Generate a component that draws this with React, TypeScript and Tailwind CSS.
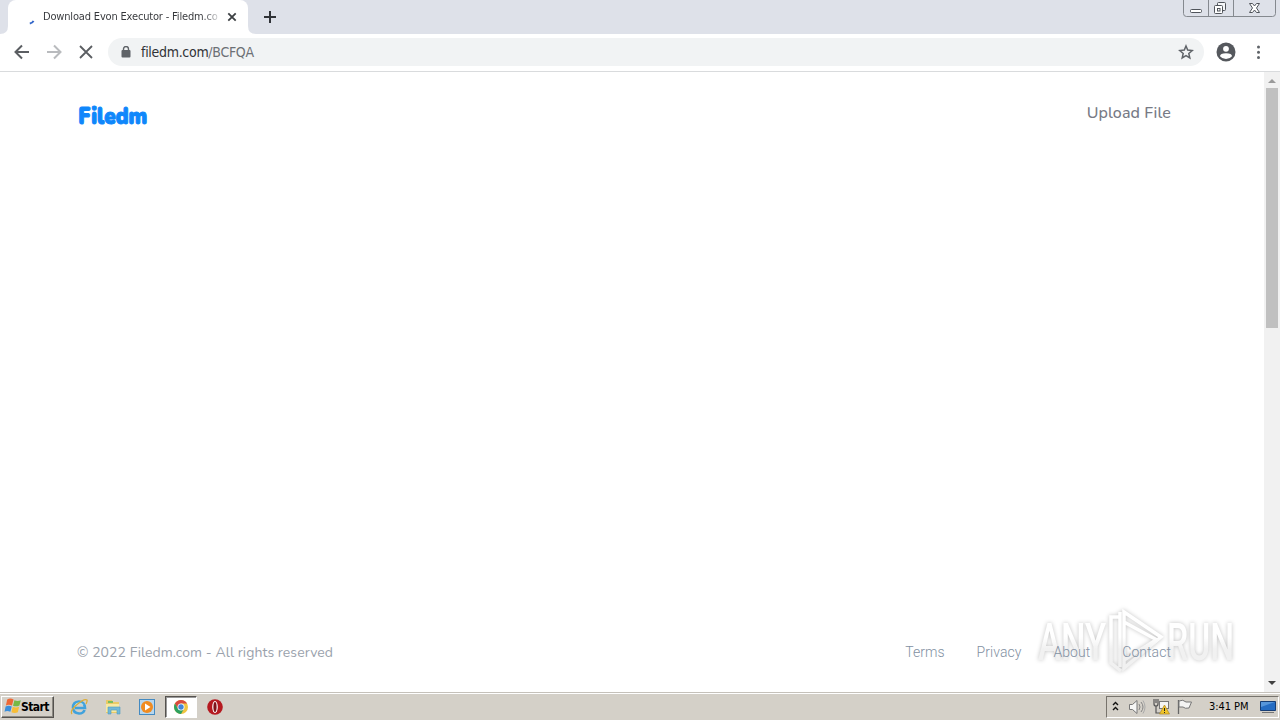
import React from "react";

function TabStrip() {
  return (
    <header className="relative flex h-[34px] shrink-0 bg-[#dee1e9]">
      <svg className="h-[34px] w-2 shrink-0" viewBox="0 0 8 34">
        <path d="M0 34Q8 34 8 26V34Z" fill="#fff" />
      </svg>
      <div className="flex w-60 items-center rounded-t-lg bg-white">
        <svg className="ml-[17px] h-4 w-[18px] shrink-0" viewBox="0 0 18 16">
          <path d="M4.800 14.500Q7.500 14 8.500 11.800" stroke="#3367c9" strokeWidth="2" fill="none" />
        </svg>
        <span className="w-[175px] bg-gradient-to-r from-[#34363a] from-91% to-[#d5d6d8] bg-clip-text pt-px text-[11px] tracking-[-0.17px] whitespace-nowrap text-transparent">
          Download Evon Executor - Filedm.co
        </span>
        <svg className="ml-2 h-4 w-4 shrink-0" viewBox="0 0 16 16" stroke="#3c4043" strokeWidth="1.8">
          <path d="M2.300 4.300l7.400 7.400M9.700 4.300l-7.400 7.400" />
        </svg>
      </div>
      <svg className="h-[34px] w-2 shrink-0" viewBox="0 0 8 34">
        <path d="M8 34Q0 34 0 26V34Z" fill="#fff" />
      </svg>
      <svg className="mt-[10px] ml-[7px] h-[14px] w-[14px]" viewBox="0 0 14 14" stroke="#303338" strokeWidth="2">
        <path d="M7 1v12M1 7h12" />
      </svg>
      <svg className="ml-auto h-[18px] w-[97px]" viewBox="0 0 97 18" fill="none" stroke="#85898f">
        <path d="M.5 0v13.500q0 3 3 3h86q3 0 3-3V0M25.500 0v16M50.500 0v16" />
        <g stroke="#50545b">
          <rect x="7.500" y="9.500" width="11" height="3" rx="1" fill="#fff" />
          <path d="M34.500 5V3.500q0-1 1-1h6q1 0 1 1v6q0 1-1 1H40" fill="#f5f6f8" />
          <rect x="31.500" y="5.500" width="8" height="8" rx="1" fill="#fff" />
          <rect x="34.500" y="8.500" width="2.500" height="2.500" />
          <path d="M66.500 3.500h3l2 2.500 2-2.500h3L73.500 8l3 4.500h-3l-2-2.500-2 2.500h-3l3-4.500z" fill="#fff" />
        </g>
      </svg>
    </header>
  );
}

function Toolbar() {
  return (
    <div className="flex h-[38px] shrink-0 items-center border-b border-[#d9dbdd] bg-white pb-px">
      <svg className="h-6 w-[108px]" viewBox="0 0 108 24" fill="none" strokeWidth="2">
        <path d="M29 12H16M22 5.500L15.500 12l6.500 6.500" stroke="#5b5e62" />
        <path d="M47 12h13M54 5.500l6.500 6.500-6.500 6.500" stroke="#b9bbbe" />
        <path d="M80 6l12 12M92 6L80 18" stroke="#5b5e62" strokeWidth="1.800" />
      </svg>
      <div className="flex h-7 w-[1096px] items-center rounded-full bg-[#f1f3f4] pr-[10px] pl-[13px]">
        <svg className="h-3 w-[10px]" viewBox="0 0 10 12">
          <path d="M2.500 5V3a2.500 2.500 0 015 0v2" fill="none" stroke="#5f6368" strokeWidth="1.400" />
          <rect x=".5" y="4" width="9" height="7.500" rx="1" fill="#5f6368" />
        </svg>
        <span className="ml-[10px] text-[14px] tracking-[-0.3px] whitespace-nowrap text-[#303236]">
          filedm.com<span className="text-[#6c7075]">/BCFQA</span>
        </span>
        <svg className="ml-auto h-4 w-4" viewBox="0 0 16 16" fill="none" stroke="#5f6368" strokeWidth="1.500">
          <path d="M8 2l1.700 4.100 4.500.4-3.400 3 1 4.400L8 11.600l-3.800 2.300 1-4.400-3.400-3 4.500-.4z" />
        </svg>
      </div>
      <svg className="h-6 w-[76px]" viewBox="0 0 76 24">
        <circle cx="22" cy="12" r="9.500" fill="#55585d" />
        <circle cx="22" cy="8.800" r="2.900" fill="#fff" />
        <path d="M16 16.300q0-3 6-3t6 3q-2 2.700-6 2.700t-6-2.700" fill="#fff" />
        <g fill="#5f6368">
          <circle cx="54.500" cy="7" r="1.500" />
          <circle cx="54.500" cy="12.300" r="1.500" />
          <circle cx="54.500" cy="17.600" r="1.500" />
        </g>
      </svg>
    </div>
  );
}

function Watermark() {
  return (
    <svg
      className="absolute top-[535px] left-[1031px] h-[70px] w-[208px] drop-shadow-[0_0_2px_rgba(0,0,0,0.24)]"
      viewBox="0 0 208 70"
    >
      <defs>
        <linearGradient id="fade" gradientUnits="userSpaceOnUse" x1="0" y1="30" x2="0" y2="42">
          <stop stopColor="#fff" />
          <stop offset="1" stopColor="#f1f1f1" />
        </linearGradient>
      </defs>
      <g fill="url(#fade)" className="font-['Roboto',sans-serif] text-[52px] font-medium">
        <text x="7" y="53" textLength="68" lengthAdjust="spacingAndGlyphs">
          ANY
        </text>
        <text x="136" y="53" textLength="67" lengthAdjust="spacingAndGlyphs">
          RUN
        </text>
      </g>
      <path
        d="M93 5l37 25-37 31zM88 10h-8v46l10 8M93 15l33 18M89 5v55M93 53l32-20"
        fill="none"
        stroke="url(#fade)"
        strokeWidth="3.500"
      />
    </svg>
  );
}

function Page() {
  return (
    <div className="relative flex min-h-0 flex-1 bg-white">
      <Watermark />
      <main className="relative flex w-[1264px] flex-col justify-between pr-[93px] pl-[78px] font-['Nunito','Noto_Sans',sans-serif]">
        <div className="flex h-[82px] items-center justify-between">
          <svg className="mt-1 h-7 w-[76px] overflow-visible" viewBox="0 0 76 28">
            <text
              x=".3"
              y="22.500"
              textLength="69"
              lengthAdjust="spacingAndGlyphs"
              className="font-['Nunito','Noto_Sans',sans-serif] text-[23.500px] font-black"
              fill="#0f87fb"
              stroke="#0f87fb"
              strokeWidth="1.100"
              strokeLinejoin="round"
            >
              Filedm
            </text>
          </svg>
          <a className="text-[16px] font-medium tracking-[0.1px] whitespace-nowrap text-[#777a85]">Upload File</a>
        </div>
        <footer className="flex h-20 items-center justify-between text-[14px] text-[#9aa2ac]">
          <span className="-ml-px tracking-[0.06px] whitespace-nowrap">© 2022 Filedm.com - All rights reserved</span>
          <nav className="flex gap-8 font-['Roboto',sans-serif] font-light tracking-[0.05px] text-[#8290a2]">
            <a>Terms</a>
            <a>Privacy</a>
            <a>About</a>
            <a>Contact</a>
          </nav>
        </footer>
      </main>
      <aside className="flex w-4 flex-col items-center bg-[#f1f1f1]">
        <svg className="h-4 w-4 shrink-0" viewBox="0 0 16 16">
          <path d="M4 11l4-4 4 4z" fill="#9a9a9a" />
        </svg>
        <div className="h-60 w-3 bg-[#c0c0c0]" />
        <svg className="mt-auto h-[17px] w-4" viewBox="0 0 16 17">
          <path d="M4 6h8l-4 4z" fill="#404040" />
        </svg>
      </aside>
    </div>
  );
}

function Explorer() {
  return (
    <svg className="h-[18px] w-[18px]" viewBox="0 0 18 18" fill="none">
      <path d="M14.500 12Q13.500 15.500 9 15.500q-6-.5-6-6T9 3.500q5.500 0 6 6.500H5" stroke="#41a2dc" strokeWidth="2.600" />
      <path d="M5 8q1-3 4-3 3 0 4 2" stroke="#9edcf5" strokeWidth="1.100" />
      <path d="M2 16Q-.5 13 7 6.500T17 2q.5 1-1 4" stroke="#ddad35" strokeWidth="1.300" />
    </svg>
  );
}

function Taskbar() {
  return (
    <footer className="flex h-[28px] shrink-0 items-center border-t border-[#c5c1ba] bg-[#d4d0c8] pt-px pb-px text-[11px] text-black shadow-[inset_0_1px_0_#fff]">
      <div className="ml-px flex h-[22px] w-[53px] items-center border border-t-white border-r-[#55524e] border-b-[#55524e] border-l-white pl-0.5 font-bold shadow-[inset_-1px_-1px_0_#8c8982]">
        <svg className="h-[17px] w-[17px] shrink-0" viewBox="0 0 16 16">
          <path d="M3 1.500q3-2 6 0L7.500 7q-3-1.500-5.700 0z" fill="#ed6835" />
          <path d="M9.800 2q3 1.500 6 0L14.500 7q-3 1.500-6 .2z" fill="#76b944" />
          <path d="M1.500 8q3-1.500 5.800 0L6 13q-3-1.500-5.500 0z" fill="#398edb" />
          <path d="M8.200 8.300q3 1.500 6 0L13 13.300q-3 1.500-6 0z" fill="#f7bd36" />
        </svg>
        <span className="text-[12px] tracking-[-0.6px]">Start</span>
      </div>
      <div className="ml-4 flex items-center">
        <Explorer />
        <svg className="ml-[16px] h-[18px] w-[18px]" viewBox="0 0 18 18">
          <path d="M2 2h6l1 2h6v11H2z" fill="#e9ca67" />
          <path d="M4 3h5v2H4z" fill="#79bd60" />
          <path d="M2 6h13v8H2z" fill="#f7e9a2" />
          <path d="M4 16V9h12v7h-3v-4H7v4z" fill="#71b8d8" stroke="#4f9bc1" strokeWidth=".6" />
        </svg>
        <svg className="ml-[16px] h-[18px] w-[18px]" viewBox="0 0 18 18">
          <rect x="1.500" y="1.500" width="15" height="15" fill="#b7d6ed" stroke="#448ac1" />
          <circle cx="9" cy="9" r="6" fill="#f08b20" />
          <path d="M7 5.500v7L12.500 9z" fill="#fff" />
        </svg>
        <div className="ml-[9px] flex h-[22px] w-8 items-center justify-center border border-t-[#55524e] border-r-white border-b-white border-l-[#55524e] bg-white shadow-[inset_1px_1px_0_#999]">
          <svg className="h-4 w-4" viewBox="0 0 16 16">
            <circle cx="8" cy="8" r="7" fill="#efc441" />
            <path d="M1.900 4.600A7 7 0 0114.100 4.600H8L5 9.700z" fill="#d94a3e" />
            <path d="M1.900 4.600A7 7 0 008 15l3-5.300-3 1.500-3-1.500z" fill="#2da160" />
            <circle cx="8" cy="8" r="3.500" fill="#fff" />
            <circle cx="8" cy="8" r="2.700" fill="#4285d8" />
          </svg>
        </div>
        <svg className="ml-[9px] h-[18px] w-[18px]" viewBox="0 0 18 18">
          <circle cx="9" cy="9" r="7.800" fill="#b51920" />
          <ellipse cx="9" cy="9" rx="2.800" ry="6" fill="#fff" />
          <ellipse cx="9" cy="9" rx="1.600" ry="5" fill="#80131a" />
        </svg>
      </div>
      <div className="mr-px ml-auto flex h-[22px] w-[173px] items-center border border-t-[#77736c] border-r-white border-b-white border-l-[#77736c]">
        <svg className="h-5 w-[90px] shrink-0" viewBox="0 0 90 20" fill="none">
          <path d="M6 8l2.500-2.500L11 8M6 13l2.500-2.500L11 13" stroke="#111" strokeWidth="1.400" />
          <path d="M22.500 7.500h3l4.500-4v13l-4.500-4h-3z" fill="#f6f6f5" stroke="#777" />
          <path d="M32 7q2 3 0 6M34 5q4 5 0 10" stroke="#858585" />
          <path d="M36 3.500q4 6.500 0 13" stroke="#aaa" />
          <path d="M47 2v5q0 2 2 2t2-2V2M49 2v4M49 9v7h4" stroke="#555" strokeWidth="1.200" />
          <rect x="52.500" y="4.500" width="9" height="7" fill="#f4f4f4" stroke="#777" />
          <path d="M57.500 8l5 9h-10z" fill="#f0c529" stroke="#ad8420" strokeWidth=".7" />
          <path d="M57.500 11v3m0 1v1" stroke="#222" />
          <path d="M71.500 17V3" stroke="#666" strokeWidth="1.300" />
          <path d="M72 4q4-2 7 1h5.500l-2.500 6q-4 1-6-1h-4z" fill="#f4f4f3" stroke="#777" />
        </svg>
        <span className="ml-[12px] w-[42px] pt-0.5 text-[11px] tracking-[-0.05px] whitespace-nowrap">3:41 PM</span>
        <svg className="ml-[8px] h-4 w-[18px] shrink-0" viewBox="0 0 18 16">
          <path d="M1.500 2.500h15v9h-15z" fill="#256cc2" stroke="#163d74" />
          <path d="M2 3h14L2 8z" fill="#5796da" />
          <path d="M3 13h12v1H3z" fill="#777" />
        </svg>
      </div>
    </footer>
  );
}

export default function App() {
  return (
    <div className="flex h-[720px] w-[1280px] flex-col overflow-hidden bg-white font-['DejaVu_Sans_Condensed','DejaVu_Sans',sans-serif]">
      <TabStrip />
      <Toolbar />
      <Page />
      <Taskbar />
    </div>
  );
}
